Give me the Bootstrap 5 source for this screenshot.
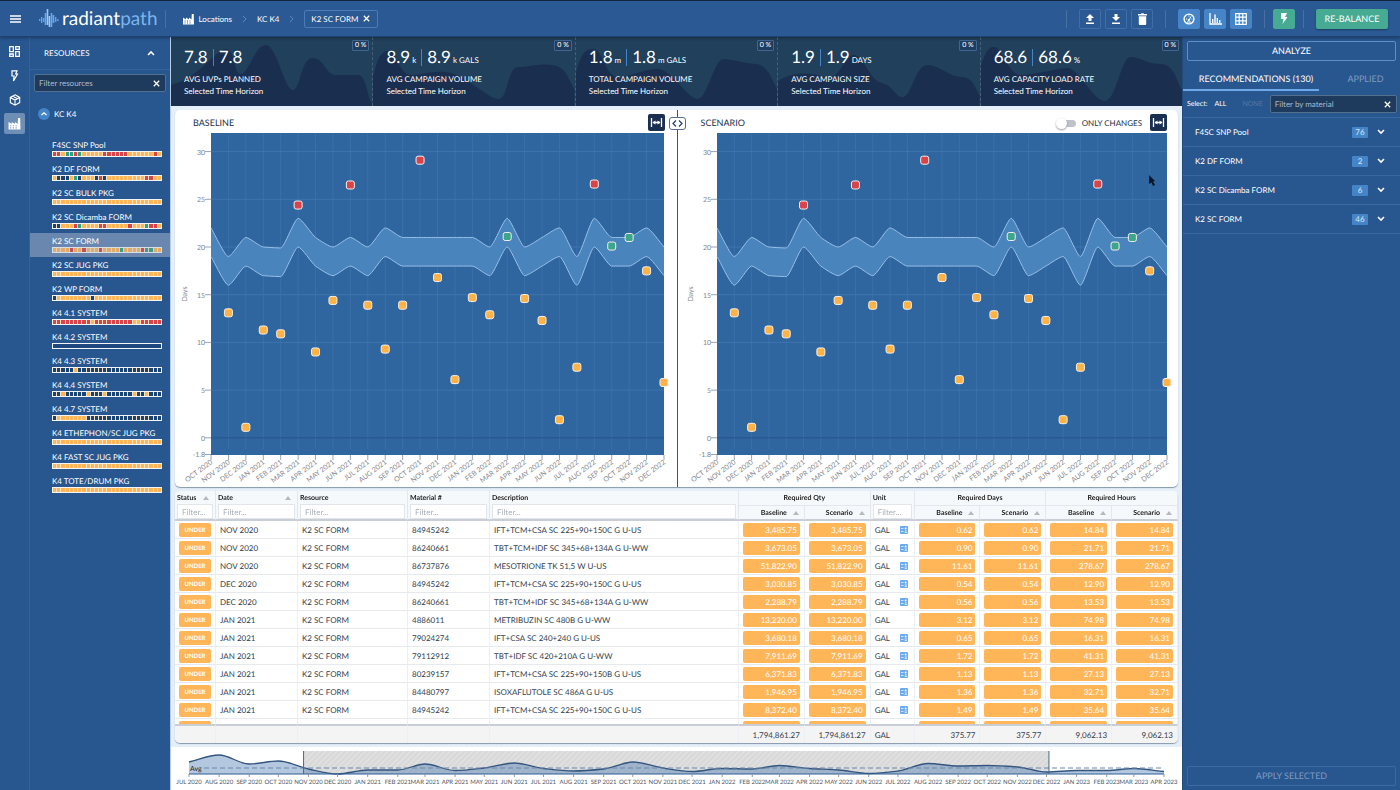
<!DOCTYPE html>
<html lang="en">
<head>
<meta charset="utf-8">
<meta name="viewport" content="width=device-width, initial-scale=1">
<title>radiantpath – K2 SC FORM</title>
<link href="https://cdn.jsdelivr.net/npm/bootstrap@5.3.0/dist/css/bootstrap.min.css" rel="stylesheet">
<style>
:root{--base:#28568f;--line:#3a69a2;--deep:#1b3050;--teal:#20405b;--sky:#4585c7;--ink:#213047;--orange:#ffb658;--red:#d9434a;--green:#46ab92;--pale:#e5effa}
body{font-family:Lato,"Liberation Sans",sans-serif;font-size:8px;line-height:12px;color:#fff;background:var(--base);text-rendering:geometricPrecision}
button,input{font:inherit;color:inherit;text-rendering:inherit}
svg{display:block}
a{color:inherit;text-decoration:none}
.topbar{height:37px;border-top:1px solid #13263f;border-bottom:1px solid #1c4172;background:#2a5993;box-shadow:0 1px 3px #0005;z-index:2}
.menu{margin-left:10px;margin-right:18px;line-height:0}
.brand{font-size:19px;line-height:24px;font-weight:400;gap:3px}
.brand b{font-weight:400;color:#7db4ee}
.vr-line{width:1px;height:18px;background:#47719f}
.crumb-rule{margin-left:7px}
.crumbs{gap:6px}
.plain{background:none;border:0;padding:0}
.chip{border:1px solid #4a7db8;border-radius:2px;height:18px;background:none;padding:0 6px}
.tools{gap:4px}
.tool{width:22px;height:20px;border:1px solid #3f6ea8;border-radius:2px;background:none;padding:0}
.tool.sky{background:var(--sky);border-color:var(--sky)}
.tool.green,.rebalance{background:var(--green);border-color:var(--green)}
.rebalance{border:0;border-radius:2px;width:72px;height:20px;font-size:9px;box-shadow:0 1px 2px #0005}
.rail{width:30px;border-right:1px solid #34629a;gap:3px}
.rail a{width:21px;height:21px;border-radius:2px}
.rail a.on{background:#6f8eb5}
.side{width:140px}
.side-head{height:33px;border-bottom:1px solid #34629a;padding:0 14px}
.field{background:#1e3b5d;border:1px solid #53718f;border-radius:2px;height:18px;padding:0 4px}
.field input{background:none;border:0;outline:0;padding:0;min-width:0;color:#c3d0df}
.field input::placeholder{color:#a9bacd;opacity:1}
.res-list{padding-top:1px}
.res{height:24px;padding:2px 8px 0 22px;display:block}
.res.on{background:#6a88af}
.cells{height:6px;border:1px solid #f3f4f6;background:#e9ddc6}
.cells i{flex:1 1 0;border-right:1px solid #f6e3c6}
.cells i:last-child{border:0}
.c-o{background:var(--orange)}.c-r{background:var(--red)}.c-g{background:#2fa386}.c-n{background:#1c4473}
.on .cells{opacity:.8}
.cells.vacant{background:#1f4880}
.work{background:var(--pale);border-left:1px solid #b8cde4}
.kpis{height:69px;background:var(--teal)}
.kpi{flex:1 1 0;min-width:0;padding:9px 12px 0 13px;border-right:1px dashed #4a6078}
.kpi:last-child{border:0}
.kpi .wave{position:absolute;inset:0;width:100%;height:100%}
.kpi .num{font-size:17px;line-height:22px}
.kpi .num small{font-size:8px;line-height:1;margin-left:2px}
.kpi .bar{width:1px;height:17px;background:#4585c7;margin:0 5px}
.kpi .cap{line-height:12px;white-space:nowrap}
.kpi .cap-top{padding-top:5px}
.pct{position:absolute;top:3px;right:3px;border:1px solid #40658f;border-radius:1px;background:#1f3d60;line-height:9px;padding:0 2px;font-size:7px}
.panel{background:#fff;border-radius:5px;box-shadow:0 1px 1px #8797ab}
.charts{flex:3 1 0;min-height:0}
.grid-panel{flex:2 1 0;min-height:0;overflow:hidden}
.chart-head{height:23px;color:var(--ink);font-size:9px;padding:4px 12px 0 18px}
.chart-head h2{font:inherit;margin:0;padding-top:3px}
.chart-head label{font-size:8px;gap:6px;padding-top:3px}
.chart-head.second{padding:4px 11px 0 24px}
.split{position:absolute;left:50%;top:0;bottom:0;width:1px;background:#39587f}
.split-btn{position:absolute;left:50%;top:7px;width:17px;height:13px;margin-left:-8px;border:1px solid #5b6f8b;border-radius:3px;background:#fff;padding:0}
.fit{width:17px;height:17px;border:0;border-radius:2px;background:var(--deep);padding:0}
.plot{min-height:0}
.switch{appearance:none;width:18px;height:7px;border-radius:4px;background:#bfc3c9;position:relative;margin:0}
.switch::before{content:"";position:absolute;left:-2px;top:-2px;width:11px;height:11px;border-radius:50%;background:#fff;box-shadow:0 1px 2px #0006}
.pointer{position:absolute;right:22px;top:65px}
.grid{width:100%;table-layout:fixed;border-collapse:separate;border-spacing:0;color:#333e4d}
.grid th{background:#f6f9fc;font-weight:700;font-size:7px;line-height:12px;color:#222;padding:1px 2px 0;border-right:1px solid #e4e8ee;vertical-align:top}
.grid thead{position:sticky;top:0;z-index:1}
.grid thead tr:first-child th{height:14px}
.grid .sub th{height:16px;border-top:1px solid #e4e8ee;text-align:right;padding:1px 5px 0}
.grid thead th[rowspan],.grid .sub th{border-bottom:2px solid #c9ced6}
.grid th.num-g{text-align:center}
.grid th input{width:100%;height:15px;border:1px solid #e2e5ea;background:#fff;padding:0 4px;font-weight:400;font-size:8px;display:block}
.grid th input::placeholder{color:#aab0b8;opacity:1}
.grid td{height:18px;padding:0 4px;border-right:1px solid #eceff3;border-bottom:1px solid #e6e9ee;white-space:nowrap;line-height:14px}
.pill{display:block;background:var(--orange);border-radius:2px;color:#fff;height:14px;line-height:14px;text-align:right;padding:0 3px}
.pill.st{font-size:6px;font-weight:700;line-height:15px;text-align:center}
.grid td.unit{padding-right:6px}
.grid tfoot{position:sticky;bottom:0}
.grid tfoot td{background:#f4f4f5;height:19px;border-top:2px solid #c9ced6;border-bottom:0;text-align:right}
.sort{display:inline-block;border:3px solid transparent;border-top:0;border-bottom:4px solid #b5b9bf;margin-left:6px}
.w-st{width:41px}.w-dt{width:82px}.w-rs{width:110px}.w-mt{width:82px}.w-ds{width:249px}.w-un{width:44px}
.time{height:43px;background:#fff}
.right{width:218px;border-left:1px solid #23497d}
.outline{border:1px solid #5e8fc8;border-radius:2px;background:none;height:20px;font-size:9px}
.outline:disabled{border-color:#3a6aa3;color:#7f9cc0}
.tabs{height:30px;font-size:9px}
.tabs .on{width:136px;border-bottom:2px solid #6ea8ea;padding:7px 0 0 10px}
.tabs .off{color:#7f9cc0;padding:5px 0 0 12px}
.sel{font-size:7px;gap:7px}
.none{color:#5479a8;margin-left:9px}
.filter-mat{width:127px;flex:none;font-size:8px}
.rec{height:29px;border-top:1px solid #3a69a2;padding:0 14px 0 12px}
.count{width:16px;height:11px;line-height:11px;background:var(--sky);text-align:center;border-radius:1px;color:#d7e6f7;margin-right:8px}
</style>
</head>
<body>
<svg width="0" height="0" class="position-absolute" aria-hidden="true">
 <defs>
  <symbol id="i-x" viewBox="0 0 10 10"><path d="M2 2l6 6M8 2l-6 6" stroke="currentColor" stroke-width="1.4"/></symbol>
  <symbol id="i-up" viewBox="0 0 10 10"><path d="M2 7l3-3 3 3" fill="none" stroke="currentColor" stroke-width="1.6"/></symbol>
  <symbol id="i-down" viewBox="0 0 10 10"><path d="M2 3l3 3 3-3" fill="none" stroke="currentColor" stroke-width="1.6"/></symbol>
  <symbol id="i-right" viewBox="0 0 6 10"><path d="M1 1l4 4-4 4" fill="none" stroke="currentColor"/></symbol>
  <symbol id="i-factory" viewBox="0 0 24 24"><path fill="currentColor" fill-rule="evenodd" d="M1 23V9l6 4V9l6 4V9l5 4 .5-11h4L23 23zM4 15v2h2v-2zm5 0v2h2v-2zm5 0v2h2v-2zM4 19v2h2v-2zm5 0v2h2v-2zm5 0v2h2v-2z"/></symbol>
  <symbol id="i-bolt" viewBox="0 0 24 24"><path fill="currentColor" d="M6 1h12l-4 8h5L9 23l2-10H6z"/></symbol>
  <symbol id="i-fit" viewBox="0 0 17 17"><path d="M3.5 4v9M13.500 4v9M5 8.500h7" stroke="#fff" fill="none" stroke-width="1.300"/><path d="M4.500 8.500l3-2v4zM12.500 8.500l-3-2v4z" fill="#fff"/></symbol>
  <symbol id="i-calc" viewBox="0 0 8 8"><rect width="8" height="8" rx="1" fill="#6aaaf0"/><path d="M1 2.500h2.500M5.700 1.200v2.600M4.700 2.500h2M1 5.500h2.500M4.700 5h2.300M4.700 6.500h2.300" stroke="#fff" stroke-width=".7"/></symbol>
 </defs>
</svg>
<div class="d-flex flex-column vh-100 overflow-hidden">
 <header class="topbar d-flex align-items-center flex-shrink-0 position-relative">
  <button class="plain menu" aria-label="Menu"><svg width="11" height="8" viewBox="0 0 11 8"><path d="M0 1h11M0 4h11M0 7h11" stroke="#fff" stroke-width="1.500"/></svg></button>
  <a class="brand d-flex align-items-center" href="#"><svg width="20" height="22" viewBox="0 0 20 22" aria-hidden="true"><path d="M.7 11v2M2.700 9v6M4.700 10v4M16.700 9v5M18.900 11v2" stroke="#5fa3ea" stroke-width="1.400"/><path d="M6.500 5v12M12.500 5v14M14.500 7v8" stroke="#67a9ee" stroke-width="1.600"/><path d="M8.500 1v16M10.500 8v11" stroke="#9bc8f7" stroke-width="1.600"/></svg><span>radiant<b>path</b></span></a>
  <span class="vr-line crumb-rule me-3"></span>
  <nav class="crumbs d-flex align-items-center" aria-label="Breadcrumb">
   <a href="#" class="d-flex align-items-center gap-1"><svg width="13" height="12"><use href="#i-factory"/></svg><span>Locations</span></a>
   <svg class="mx-1" width="5" height="8" color="#6f96c4"><use href="#i-right"/></svg>
   <a href="#">KC K4</a>
   <svg class="mx-1" width="5" height="8" color="#6f96c4"><use href="#i-right"/></svg>
   <button class="chip d-flex align-items-center gap-1">K2 SC FORM <svg width="9" height="9"><use href="#i-x"/></svg></button>
  </nav>
  <div class="ms-auto d-flex align-items-center me-2 pe-1">
   <span class="vr-line me-2"></span>
   <div class="tools d-flex mx-1">
    <button class="tool d-grid" aria-label="Upload"><svg class="m-auto" width="10" height="12" viewBox="0 0 10 12"><path fill="#fff" d="M5 1l4 4H6.500v3h-3V5H1zM1 9.500h8V11H1z"/></svg></button>
    <button class="tool d-grid" aria-label="Download"><svg class="m-auto" width="10" height="12" viewBox="0 0 10 12"><path fill="#fff" d="M5 8l4-4H6.500V1h-3v3H1zM1 9.500h8V11H1z"/></svg></button>
    <button class="tool d-grid" aria-label="Delete"><svg class="m-auto" width="9" height="12" viewBox="0 0 9 12"><path fill="#fff" d="M0 1h3l.5-.8h2L6 1h3v1.500H0zM.8 3.200h7.400V11q0 1-1 1H1.800q-1 0-1-1z"/></svg></button></div>
   <span class="vr-line mx-2"></span>
   <div class="tools d-flex ms-1 me-2">
    <button class="tool sky d-grid" aria-label="Gauges"><svg class="m-auto" width="12" height="12" viewBox="0 0 12 12"><circle cx="6" cy="6" r="4.900" fill="none" stroke="#fff" stroke-width="1.400"/><path d="M6 7l2-3.500M3 6h1M6 2.500v1M8.500 6h.8M4 9h4" stroke="#fff"/><circle cx="5.800" cy="7" r="1.100" fill="#fff"/></svg></button>
    <button class="tool sky d-grid" aria-label="Charts"><svg class="m-auto" width="13" height="12" viewBox="0 0 13 12"><path d="M1 0v11h12" fill="none" stroke="#fff" stroke-width="1.300"/><path d="M3.700 6v4M6 1.500V10M8.300 5v5M10.700 7v3" stroke="#fff" stroke-width="1.400"/></svg></button>
    <button class="tool sky d-grid" aria-label="Table"><svg class="m-auto" width="12" height="12" viewBox="0 0 12 12"><path d="M.7.7h10.600v10.600H.700zM.7 4.200h10.600M.7 7.800h10.600M4.200.7v10.600M7.800.7v10.600" fill="none" stroke="#fff" stroke-width="1.200"/></svg></button></div>
   <span class="vr-line ms-1 me-2"></span>
   <button class="tool green d-grid" aria-label="Run"><svg class="m-auto" width="12" height="13"><use href="#i-bolt"/></svg></button>
   <span class="vr-line mx-2"></span>
   <button class="rebalance ms-1">RE-BALANCE</button>
  </div>
 </header>
 <div class="d-flex flex-fill" style="min-height:0">
  <nav class="rail d-flex flex-column align-items-center flex-shrink-0 pt-1" aria-label="Sections">
   <a class="d-grid" href="#" aria-label="Dashboard"><svg class="m-auto" width="11" height="11" viewBox="0 0 11 11"><path d="M.7.7h3.600v5H.700zM6.700.7h3.600v2.600H6.700zM.7 8h3.600v2.300H.700zM6.700 5.700h3.600v4.600H6.700z" fill="none" stroke="#fff" stroke-width="1.300"/></svg></a>
   <a class="d-grid" href="#" aria-label="Activity"><svg class="m-auto" width="9" height="12" viewBox="0 0 9 12"><path d="M2 .8h5L5.700 4H7.500L3.500 11l.6-5H2z" fill="none" stroke="#fff" stroke-width="1.200"/></svg></a>
   <a class="d-grid" href="#" aria-label="Materials"><svg class="m-auto" width="12" height="12" viewBox="0 0 12 12"><path d="M6 .8l4.700 2.600v5.200L6 11.200 1.300 8.600V3.400zM1.300 3.400L6 6l4.700-2.600M6 6v5M3.500 2l5 2.700" fill="none" stroke="#fff" stroke-width="1.100"/></svg></a>
   <a class="d-grid on" href="#" aria-label="Locations"><svg class="m-auto" width="13" height="13"><use href="#i-factory"/></svg></a>
  </nav>
  <aside class="side flex-shrink-0">
   <div class="side-head d-flex align-items-center justify-content-between mb-1"><span>RESOURCES</span><button class="plain" aria-label="Collapse"><svg width="10" height="10"><use href="#i-up"/></svg></button></div>
   <div class="field d-flex align-items-center mx-1"><input class="flex-fill" type="text" placeholder="Filter resources" aria-label="Filter resources"><button class="plain" aria-label="Clear"><svg width="9" height="9"><use href="#i-x"/></svg></button></div>
   <button class="plain d-flex align-items-center gap-1 mt-3 mb-3 ms-1 ps-1"><svg width="12" height="12" viewBox="0 0 12 12"><circle cx="6" cy="6" r="6" fill="#4585c7"/><path d="M3.500 7L6 4.800 8.500 7" fill="none" stroke="#fff" stroke-width="1.200"/></svg><span>KC K4</span></button>
   <div id="resources" class="res-list"></div>
  </aside>
  <main class="work d-flex flex-column flex-fill" style="min-width:0">
   <section class="kpis d-flex flex-shrink-0" id="kpis"></section>
   <section class="charts panel position-relative d-flex mx-1 mt-1">
    <div class="d-flex flex-column w-50">
     <div class="chart-head d-flex align-items-start justify-content-between"><h2>BASELINE</h2><button class="fit" aria-label="Fit baseline"><svg width="17" height="17"><use href="#i-fit"/></svg></button></div>
     <div class="plot flex-fill" data-left="36" data-right="13"></div>
    </div>
    <div class="d-flex flex-column w-50">
     <div class="chart-head second d-flex align-items-start"><h2 class="me-auto">SCENARIO</h2><label class="d-flex align-items-center me-2"><input class="switch" type="checkbox"> ONLY CHANGES</label><button class="fit" aria-label="Fit scenario"><svg width="17" height="17"><use href="#i-fit"/></svg></button></div>
     <div class="plot flex-fill" data-left="40" data-right="12"></div>
    </div>
    <span class="split"></span>
    <button class="split-btn d-grid" aria-label="Resize panes"><svg class="m-auto" width="11" height="9" viewBox="0 0 11 9"><path d="M4 1.500l-3 3 3 3M7 1.500l3 3-3 3" fill="none" stroke="#213f66" stroke-width="1.200"/></svg></button>
    <svg class="pointer" width="8" height="12" viewBox="0 0 8 12" aria-hidden="true"><path d="M1 0l6 6-2 .5L7 10l-2 1-1.500-3.500L1 9z" fill="#0a1526"/></svg>
   </section>
   <section class="grid-panel panel mx-1 my-1">
    <table class="grid">
     <colgroup><col class="w-st"><col class="w-dt"><col class="w-rs"><col class="w-mt"><col class="w-ds"><col><col><col class="w-un"><col><col><col><col></colgroup>
     <thead>
      <tr>
       <th rowspan="2"><div class="d-flex justify-content-between align-items-center pe-1">Status<span class="sort"></span></div><input placeholder="Filter..." aria-label="Filter status"></th>
       <th rowspan="2"><div class="d-flex justify-content-between align-items-center pe-1">Date<span class="sort"></span></div><input placeholder="Filter..." aria-label="Filter date"></th>
       <th rowspan="2">Resource<input placeholder="Filter..." aria-label="Filter resource"></th>
       <th rowspan="2">Material #<input placeholder="Filter..." aria-label="Filter material number"></th>
       <th rowspan="2">Description<input placeholder="Filter..." aria-label="Filter description"></th>
       <th class="num-g" colspan="2">Required Qty</th>
       <th rowspan="2">Unit<input placeholder="Filter..." aria-label="Filter unit"></th>
       <th class="num-g" colspan="2">Required Days</th>
       <th class="num-g" colspan="2">Required Hours</th>
      </tr>
      <tr class="sub"><th>Baseline<span class="sort"></span></th><th>Scenario<span class="sort"></span></th><th>Baseline<span class="sort"></span></th><th>Scenario<span class="sort"></span></th><th>Baseline<span class="sort"></span></th><th>Scenario<span class="sort"></span></th></tr>
     </thead>
     <tbody id="rows"></tbody>
     <tfoot><tr><td></td><td></td><td></td><td></td><td></td><td>1,794,861.27</td><td>1,794,861.27</td><td class="text-start">GAL</td><td>375.77</td><td>375.77</td><td>9,062.13</td><td>9,062.13</td></tr></tfoot>
    </table>
   </section>
   <section class="time flex-shrink-0" id="timeline"></section>
  </main>
  <aside class="right d-flex flex-column flex-shrink-0">
   <button class="outline mx-1 mt-1">ANALYZE</button>
   <div class="tabs d-flex"><button class="plain on">RECOMMENDATIONS (130)</button><button class="plain off flex-fill">APPLIED</button></div>
   <div class="sel d-flex align-items-center px-1 my-1"><span>Select:</span><button class="plain">ALL</button><button class="plain none">NONE</button><div class="field filter-mat d-flex align-items-center ms-auto"><input class="flex-fill" type="text" placeholder="Filter by material" aria-label="Filter by material"><button class="plain" aria-label="Clear"><svg width="9" height="9"><use href="#i-x"/></svg></button></div></div>
   <div id="recs"></div>
   <button class="outline mx-1 mt-auto mb-1" disabled>APPLY SELECTED</button>
  </aside>
 </div>
</div>
<script src="https://cdn.jsdelivr.net/npm/bootstrap@5.3.0/dist/js/bootstrap.bundle.min.js"></script>
<script>
const $ = id => document.getElementById(id);
const O26 = 'o'.repeat(26);
const resources = [
 ['F4SC SNP Pool','rroggrgooooorrrrrroooooo'+'ro'],['K2 DF FORM','onnnognooonrnooooooooorroo'],['K2 SC BULK PKG',O26],
 ['K2 SC Dicamba FORM','nnooorgoooorrooooorooogrro'],['K2 SC FORM','oooorooroooroooogoooorggoo'],['K2 SC JUG PKG',O26],
 ['K2 WP FORM','noooooooonoooooooooooooooo'],['K4 4.1 SYSTEM','rrrrrrrrrorrrrrrrrroorrrrr'],['K4 4.2 SYSTEM',''],
 ['K4 4.3 SYSTEM','nnnnnonnnnnnnnnnnnnnnnnnnn'],['K4 4.4 SYSTEM','nnonnnnnonnnonnnnnnonnonnn'],['K4 4.7 SYSTEM','nooooooonnnnnnnnnnnnnnnnnn'],
 ['K4 ETHEPHON/SC JUG PKG',O26],['K4 FAST SC JUG PKG',O26],['K4 TOTE/DRUM PKG',O26]];
$('resources').innerHTML = resources.map(([n,c]) => `<a href="#" class="res${n==='K2 SC FORM'?' on':''}">${n}<span class="cells d-flex${c?'':' vacant'}">${[...c].map(k=>`<i class="c-${k}"></i>`).join('')}</span></a>`).join('');

const kpis = [
 ['7.8','','','AVG UVPs PLANNED','M0 48C30 40 45 12 55 12S62 37 70 37 84 8 95 8 114 53 122 53 130 21 142 21 155 38 165 38H188C196 38 198 66 202 66V69H0Z'],
 ['8.9','k','k GALS','AVG CAMPAIGN VOLUME','M0 40C5 20 8 14 16 14S26 38 38 38 62 32 78 36 116 62 126 62 134 30 146 30 165 26 180 28 196 44 202 52V69H0Z'],
 ['1.8','m','m GALS','TOTAL CAMPAIGN VOLUME','M0 36C6 14 10 12 18 12S30 40 42 40 68 32 82 32 112 62 122 62 138 22 148 22 166 26 180 27 196 44 202 52V69H0Z'],
 ['1.9','','DAYS','AVG CAMPAIGN SIZE','M0 44C12 36 30 34 46 40S66 18 76 18 92 44 104 46 118 62 126 60 138 28 150 28 172 40 184 40 198 52 202 58V69H0Z'],
 ['68.6','','%','AVG CAPACITY LOAD RATE','M0 28C6 12 8 10 14 10S28 38 40 38 74 32 86 31 112 64 124 64 140 20 150 20 166 27 180 27 196 44 202 54V69H0Z']];
const unit = u => u ? `<small>${u}</small>` : '';
$('kpis').innerHTML = kpis.map(([v,u,u2,l,d]) => `<div class="kpi position-relative"><svg class="wave" viewBox="0 0 202 69" preserveAspectRatio="none" aria-hidden="true"><path d="${d}" fill="#1a2f4f"/></svg><div class="position-relative"><div class="num d-flex align-items-center"><span>${v}${unit(u)}</span><span class="bar"></span><span>${v}${unit(u2)}</span></div><div class="cap cap-top">${l}</div><div class="cap">Selected Time Horizon</div></div><span class="pct">0 %</span></div>`).join('');

const recs = [['F4SC SNP Pool',76],['K2 DF FORM',2],['K2 SC Dicamba FORM',6],['K2 SC FORM',46]];
$('recs').innerHTML = recs.map(([n,c]) => `<div class="rec d-flex align-items-center"><span class="me-auto">${n}</span><span class="count">${c}</span><button class="plain" aria-label="Expand ${n}"><svg width="10" height="10"><use href="#i-down"/></svg></button></div>`).join('') + '<div class="rec"></div>';

const rows = [
 ['NOV 2020','84945242','IFT+TCM+CSA SC 225+90+150C G U-US','3,485.75','0.62','14.84',1],
 ['NOV 2020','86240661','TBT+TCM+IDF SC 345+68+134A G U-WW','3,673.05','0.90','21.71',1],
 ['NOV 2020','86737876','MESOTRIONE TK 51,5 W U-US','51,822.90','11.61','278.67',1],
 ['DEC 2020','84945242','IFT+TCM+CSA SC 225+90+150C G U-US','3,030.85','0.54','12.90',1],
 ['DEC 2020','86240661','TBT+TCM+IDF SC 345+68+134A G U-WW','2,288.79','0.56','13.53',1],
 ['JAN 2021','4886011','METRIBUZIN SC 480B G U-WW','13,220.00','3.12','74.98',0],
 ['JAN 2021','79024274','IFT+CSA SC 240+240 G U-US','3,680.18','0.65','16.31',1],
 ['JAN 2021','79112912','TBT+IDF SC 420+210A G U-WW','7,911.69','1.72','41.31',1],
 ['JAN 2021','80239157','IFT+TCM+CSA SC 225+90+150B G U-US','6,371.83','1.13','27.13',1],
 ['JAN 2021','84480797','ISOXAFLUTOLE SC 486A G U-US','1,946.95','1.36','32.71',1],
 ['JAN 2021','84945242','IFT+TCM+CSA SC 225+90+150C G U-US','8,372.40','1.49','35.64',1],
 ['','','','','','',0]];
const pill = t => `<td><span class="pill">${t}</span></td>`;
$('rows').innerHTML = rows.map(([d,m,x,q,y,h,c]) => `<tr><td><span class="pill st">${d?'UNDER':''}</span></td><td>${d}</td><td>${d?'K2 SC FORM':''}</td><td>${m}</td><td>${x}</td>${pill(q)+pill(q)}<td class="unit"><span class="d-flex align-items-center justify-content-between">${d?'GAL':''}${c?'<svg width="8" height="8"><use href="#i-calc"/></svg>':''}</span></td>${pill(y)+pill(y)+pill(h)+pill(h)}</tr>`).join('');

/* Monotone cubic interpolation: never overshoots the samples. A larger k gives straighter flanks and tighter peaks. */
function curve(p,k=3){
 const n=p.length, s=[], m=[];
 for(let i=0;i<n-1;i++) s[i]=(p[i+1][1]-p[i][1])/(p[i+1][0]-p[i][0]);
 m[0]=s[0]; m[n-1]=s[n-2];
 for(let i=1;i<n-1;i++) m[i]=s[i-1]*s[i]<=0?0:2*s[i-1]*s[i]/(s[i-1]+s[i]);
 let d='';
 for(let i=0;i<n-1;i++){const h=(p[i+1][0]-p[i][0])/k; d+=`C${p[i][0]+h} ${p[i][1]+m[i]*h} ${p[i+1][0]-h} ${p[i+1][1]-m[i+1]*h} ${p[i+1][0]} ${p[i+1][1]}`;}
 return d;
}
const MON=['JAN','FEB','MAR','APR','MAY','JUN','JUL','AUG','SEP','OCT','NOV','DEC'];
const monthAt = (y,m,i) => `${MON[(m+i)%12]} ${y+Math.floor((m+i)/12)}`;
const top26 = [22,19,21,20,19.9,23,21,20,21,20,22,21,21,21,21,21,20,23,20,21,22,19,23,21,21,22,20];
const pts = [null,13.1,1.1,11.3,10.9,24.4,9,14.4,26.5,13.9,9.3,13.9,29.1,16.8,6.1,14.7,12.9,21.1,14.6,12.3,1.9,7.4,26.6,20.1,21,17.5,5.8];
function drawPlot(el){
 const W=el.clientWidth,H=el.clientHeight,L=+el.dataset.left,R=W-el.dataset.right,B=H-32;
 const X=i=>L+(R-L)*i/26, Y=v=>B-(v+1.8)*B/33.75;
 let s=`<svg width="${W}" height="${H}" font-size="7" fill="#7f858d"><rect x="${L}" width="${R-L}" height="${B}" fill="#30669f"/>`;
 for(let i=1;i<26;i++) s+=`<path d="M${X(i)} 0V${B-6}" stroke="#3b71a9"/>`;
 for(let v=0;v<=30;v+=5) s+=`<path d="M${L} ${Y(v)}H${R}" stroke="${v?'#3e75ad':'#25558b'}"/><path d="M${L-6} ${Y(v)}H${L}" stroke="#9aa4b0"/><text x="${L-6}" y="${Y(v)+3}" text-anchor="end">${v}</text>`;
 s+=`<path d="M${L-6} ${B-.5}H${L}" stroke="#9aa4b0"/><text x="${L-6}" y="${B+2}" text-anchor="end">-1.8</text><text transform="translate(${L-24} ${B/2}) rotate(-90)" text-anchor="middle">Days</text>`;
 const up=top26.map((v,i)=>[X(i),Y(v)]), lo=top26.map((v,i)=>[X(i),Y(v-3)]), rev=[...lo].reverse();
 s+=`<path d="M${up[0]}${curve(up,5)}L${rev[0]}${curve(rev,5)}Z" fill="#4a84bd"/><path d="M${up[0]}${curve(up,5)}M${lo[0]}${curve(lo,5)}" fill="none" stroke="#98c0ea"/>`;
 pts.forEach((v,i)=>{ if(v!==null) s+=`<rect x="${X(i)-4}" y="${Y(v)-4}" width="8" height="8" rx="2" fill="${v>24?'#d9434a':v>21.5||v<20?'#ffb347':'#3ca58a'}" stroke="#f3f0ec"/>`; });
 for(let i=0;i<=26;i++) s+=`<path d="M${X(i)} ${B}v5" stroke="#9aa4b0"/><text transform="translate(${X(i)+2} ${B+8}) rotate(-37)" text-anchor="end">${monthAt(2020,9,i)}</text>`;
 el.innerHTML=s+'</svg>';
}
const load=[12,19,10,13,5,0,4,4,10,3.5,6,11,5.5,3,5,12,6,2.500,5.5,5,8.5,5.5,4,.5,3,10.5,8,8.5,7,2,3.5,3.5,5.500,2.500];
function drawTimeline(){
 const el=$('timeline'),W=el.clientWidth,L=18,R=W-18,B=27;
 const t=i=>Date.UTC(2020,6+i,1), X=i=>L+(R-L)*(t(i)-t(0))/(t(33)-t(0));
 const p=load.map((v,i)=>[X(i),B-v]), a=L+(R-L)*.1175, b=L+(R-L)*.882;
 let s=`<svg width="${W}" height="43" font-size="6" fill="#4c5561"><defs><pattern id="hatch" width="4" height="4" patternUnits="userSpaceOnUse" patternTransform="rotate(45)"><rect width="4" height="4" fill="#d9d9d9"/><path d="M0 0V4" stroke="#e4e4e4" stroke-width="2"/></pattern></defs>`;
 s+=`<rect x="${a}" y="4" width="${b-a}" height="23" fill="url(#hatch)"/><path d="M${p[0]}${curve(p)}V${B}H${L}Z" fill="#4b7db3" fill-opacity=".42"/><path d="M${p[0]}${curve(p)}" fill="none" stroke="#34557f" stroke-width="1.300"/><path d="M${L+15} 21H${R}" stroke="#6b87a8" stroke-dasharray="5 3"/><path d="M${L} ${B}H${R}" stroke="#2d5c96"/><path d="M${a} 4V${B}M${b} 4V${B}" stroke="#4a678c"/><text x="${L+1}" y="24" font-size="7" fill="#222">Avg</text>`;
 for(let i=0;i<=33;i++) s+=`<path d="M${X(i)} ${B}v3" stroke="#8d97a3"/><text x="${X(i)}" y="37" text-anchor="middle">${monthAt(2020,6,i)}</text>`;
 el.innerHTML=s+'</svg>';
}
function draw(){document.querySelectorAll('.plot').forEach(e=>{e.innerHTML='';drawPlot(e)});drawTimeline();}
draw(); addEventListener('resize',draw);
</script>
</body>
</html>
